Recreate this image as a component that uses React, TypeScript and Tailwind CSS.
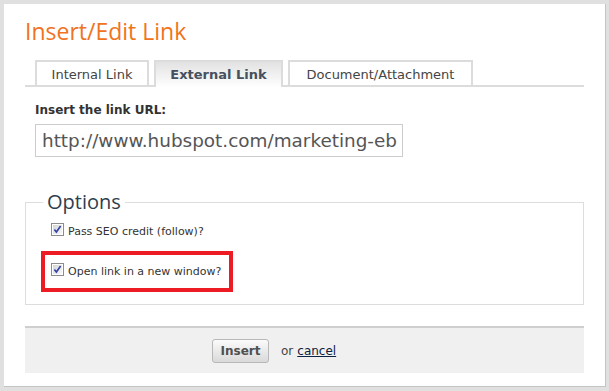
import React from 'react';

const TABS = [
  { label: 'Internal Link', width: 'w-[114px]', active: false },
  { label: 'External Link', width: 'w-[129px]', active: true },
  { label: 'Document/Attachment', width: 'w-[185px]', active: false },
];

function CheckMark() {
  return (
    <svg width="13" height="13" viewBox="0 0 13 13" className="shrink-0">
      <defs>
        <linearGradient id="cbg" x1="0" y1="0" x2="1" y2="1">
          <stop offset="0" stopColor="#d4d4d4" />
          <stop offset="1" stopColor="#f8f8f8" />
        </linearGradient>
      </defs>
      <rect x="0.5" y="0.5" width="12" height="12" fill="#fff" stroke="#8c8c8c" />
      <rect x="2" y="2" width="9" height="9" fill="url(#cbg)" />
      <path d="M3.4 6.4 L5.4 9 L9.6 3" fill="none" stroke="#3446a8" strokeWidth="1.7" />
    </svg>
  );
}

function CheckRow({ label }: { label: string }) {
  return (
    <div className="flex items-start">
      <CheckMark />
      <span className="ml-[4px] mt-[2px] text-[11px] leading-[14px] text-[#333]">{label}</span>
    </div>
  );
}

export default function App() {
  return (
    <div
      className="w-[609px] h-[391px] bg-[#e0e0e0] pt-[4px] pl-[4px]"
      style={{ fontFamily: '"DejaVu Sans", Verdana, sans-serif' }}
    >
      <div className="w-[602px] h-[383px] bg-white border-r border-b border-[#c4c4c4] pt-[12px] pl-[21px]">
        <div className="w-[559px]">
          <h1
            className="text-[23px] leading-[30px] text-[#f07320] font-normal"
            style={{ fontFamily: '"Open Sans", sans-serif' }}
          >
            Insert/Edit Link
          </h1>

          {/* tabs */}
          <div className="mt-[14px] flex items-end gap-[5px] border-b-2 border-[#dcdcdc] pl-[10px]">
            {TABS.map(t => (
              <div
                key={t.label}
                className={
                  t.active
                    ? `${t.width} -mb-[2px] border-2 border-b-0 border-[#dcdcdc] bg-gradient-to-b from-[#e2e2e2] to-white pt-[5px] pb-[5px] text-center text-[13px] leading-[15px] font-bold text-[#46505e]`
                    : `${t.width} border-2 border-b-0 border-[#dcdcdc] bg-white pt-[5px] pb-[3px] text-center text-[13px] leading-[15px] text-[#444]`
                }
              >
                {t.label}
              </div>
            ))}
          </div>

          <div className="ml-[10px] mt-[16px] text-[12px] leading-[14px] font-bold text-[#333]">
            Insert the link URL:
          </div>
          <input
            readOnly
            value="http://www.hubspot.com/marketing-eb"
            className="ml-[10px] mt-[7px] block w-[368px] h-[33px] border border-[#cccccc] pl-[6px] text-[18.4px] text-[#555] outline-none"
            style={{ fontFamily: '"DejaVu Sans", Verdana, sans-serif' }}
          />

          <fieldset className="mt-[33px] border border-[#dddddd] pb-[12px]">
            <legend
              className="ml-[17px] px-[4px] text-[20px] leading-[24px] text-[#2d3e50]"
              style={{ fontFamily: '"Open Sans", sans-serif' }}
            >
              Options
            </legend>
            <div className="ml-[25px] mt-[9px]">
              <CheckRow label="Pass SEO credit (follow)?" />
            </div>
            <div className="ml-[15px] mt-[12px] w-[192px] border-4 border-[#ed1c24] pl-[6px] pt-[8px] pb-[9px]">
              <CheckRow label="Open link in a new window?" />
            </div>
          </fieldset>

          <div className="mt-[21px] h-[47px] flex items-center border-t-2 border-[#cfcfcf] bg-[#f0f0f0]">
            <button className="ml-[187px] h-[24px] w-[57px] rounded-[3px] border border-[#b8b8b8] bg-gradient-to-b from-[#fbfbfb] to-[#d9d9d9] text-[12px] font-bold text-[#505050]">
              Insert
            </button>
            <span className="ml-[12px] text-[12px] text-[#444]">or</span>
            <a href="#" className="ml-[4px] text-[12px] text-[#0d2240] underline">
              cancel
            </a>
          </div>
        </div>
      </div>
    </div>
  );
}
